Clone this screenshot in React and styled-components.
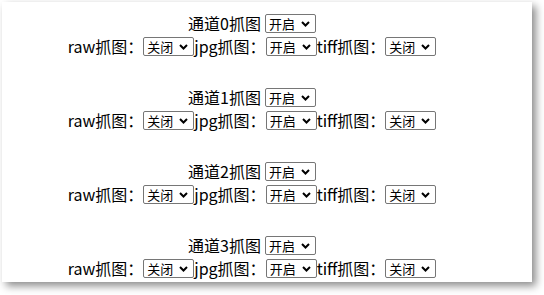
import styled, { createGlobalStyle } from "styled-components";

const GlobalStyle = createGlobalStyle`
  html, body {
    margin: 0;
    padding: 0;
    background: #ffffff;
  }
  body {
    min-height: 100vh;
    font-family: "Noto Sans CJK SC", "Open Sans", sans-serif;
  }
`;

const Panel = styled.div`
  box-sizing: border-box;
  width: 530px;
  height: 280px;
  margin: 2px;
  padding: 10px 30px 0 0;
  background: #ffffff;
  box-shadow: 4px 4px 8px rgba(0, 0, 0, 0.45);
  display: flex;
  flex-direction: column;
  gap: 28px;
`;

const Group = styled.div`
  display: flex;
  flex-direction: column;
  font-size: 16px;
  color: #000;
`;

const Line = styled.div`
  display: flex;
  justify-content: center;
  align-items: center;
  height: 23px;
  white-space: nowrap;
`;

const Label = styled.span`
  line-height: 23px;
  margin-right: ${(p) => p.$gap || 0}px;
`;

const SelectWrap = styled.span`
  position: relative;
  display: inline-flex;
  height: 19px;
`;

const Select = styled.select`
  appearance: none;
  box-sizing: border-box;
  height: 19px;
  margin: 0;
  padding: 0 19px 0 3px;
  font-family: "Noto Sans CJK SC", sans-serif;
  font-size: 13px;
  line-height: 17px;
  border: 1px solid #767676;
  border-radius: 2px;
  background: #fff;
  color: #000;
`;

const Chevron = styled.svg`
  position: absolute;
  right: 6px;
  top: 7px;
  width: 9px;
  height: 6px;
  pointer-events: none;
`;

const Switch = ({ value }) => (
  <SelectWrap>
    <Select defaultValue={value}>
      <option value="on">开启</option>
      <option value="off">关闭</option>
    </Select>
    <Chevron viewBox="0 0 9 6">
      <path d="M1 1l3.5 3.5L8 1" fill="none" stroke="#000" strokeWidth="2" />
    </Chevron>
  </SelectWrap>
);

const channels = [0, 1, 2, 3];

export default function App() {
  return (
    <>
      <GlobalStyle />
      <Panel>
        {channels.map((ch) => (
          <Group key={ch}>
            <Line>
              <Label $gap={4}>通道{ch}抓图</Label>
              <Switch value="on" />
            </Line>
            <Line>
              <Label>raw抓图：</Label>
              <Switch value="off" />
              <Label>jpg抓图：</Label>
              <Switch value="on" />
              <Label>tiff抓图：</Label>
              <Switch value="off" />
            </Line>
          </Group>
        ))}
      </Panel>
    </>
  );
}
